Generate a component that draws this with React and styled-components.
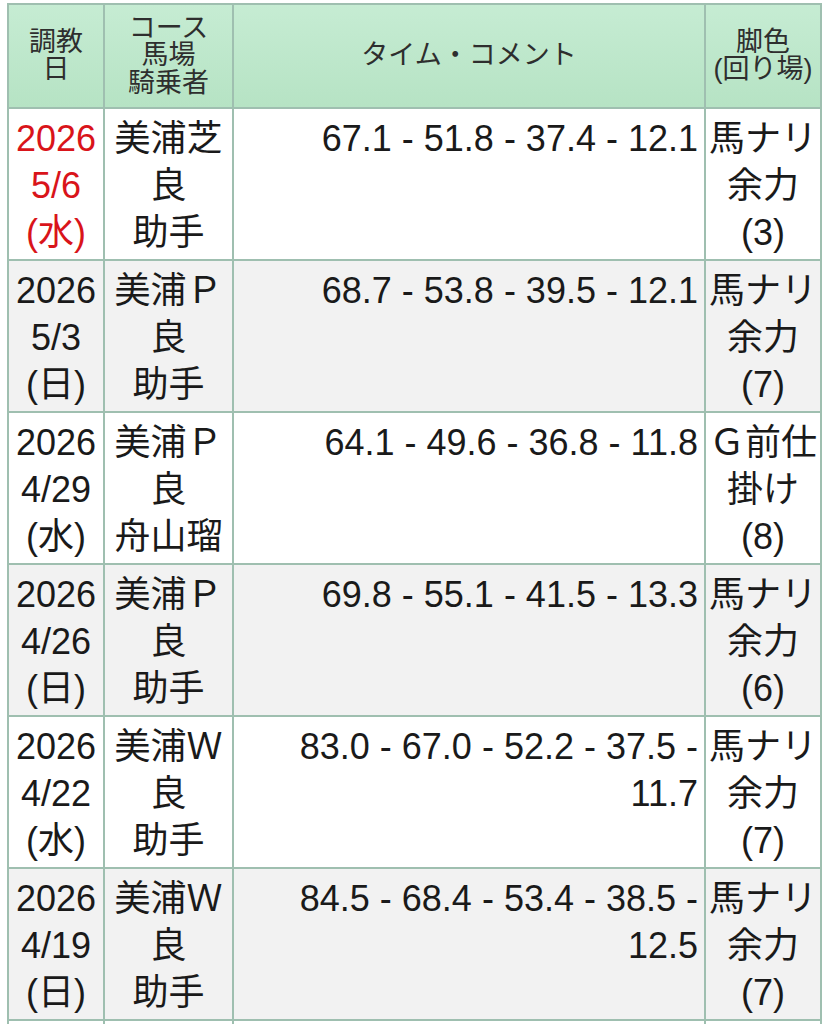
import styled, { createGlobalStyle } from "styled-components";

const GlobalStyle = createGlobalStyle`
  html, body {
    margin: 0;
    padding: 0;
    background: #fff;
  }
  body {
    padding: 3px 9px 0 7px;
    font-family: "Liberation Sans", "Noto Sans CJK JP", sans-serif;
    color: #1a1a1a;
  }
`;

const Table = styled.table`
  width: 815px;
  border-collapse: collapse;
  table-layout: fixed;
`;

const Head = styled.th`
  background: linear-gradient(#c6ecd3, #b6e3c4);
  border: 2px solid #9fbfb0;
  font-weight: normal;
  font-size: 27px;
  line-height: 27.5px;
  color: #2e2e2e;
  text-align: center;
  vertical-align: middle;
  padding: 0;
  height: 102px;
  width: ${(p) => p.$w}px;
`;

const Row = styled.tr`
  background: ${(p) => (p.$shade ? "#f2f2f2" : "#fff")};
`;

const Cell = styled.td`
  border: 2px solid #9fbfb0;
  font-size: 36px;
  line-height: 47px;
  padding: ${(p) => (p.$align === "right" ? "6px 6px 2px 3px" : "6px 2px 2px")};
  height: 142px;
  vertical-align: top;
  text-align: ${(p) => p.$align || "center"};
  color: ${(p) => (p.$red ? "#d9141a" : "#1a1a1a")};
`;

const Line = styled.div`
  white-space: nowrap;
`;

const Lines = ({ items }) =>
  items.map((t, i) => (
    <Line key={i}>{t}</Line>
  ));

const rows = [
  { date: ["2026", "5/6", "(水)"], red: true, course: ["美浦芝", "良", "助手"], time: "67.1 - 51.8 - 37.4 - 12.1", leg: ["馬ナリ", "余力", "(3)"] },
  { date: ["2026", "5/3", "(日)"], course: ["美浦Ｐ", "良", "助手"], time: "68.7 - 53.8 - 39.5 - 12.1", leg: ["馬ナリ", "余力", "(7)"] },
  { date: ["2026", "4/29", "(水)"], course: ["美浦Ｐ", "良", "舟山瑠"], time: "64.1 - 49.6 - 36.8 - 11.8", leg: ["Ｇ前仕", "掛け", "(8)"] },
  { date: ["2026", "4/26", "(日)"], course: ["美浦Ｐ", "良", "助手"], time: "69.8 - 55.1 - 41.5 - 13.3", leg: ["馬ナリ", "余力", "(6)"] },
  { date: ["2026", "4/22", "(水)"], course: ["美浦Ｗ", "良", "助手"], time: "83.0 - 67.0 - 52.2 - 37.5 - 11.7", leg: ["馬ナリ", "余力", "(7)"] },
  { date: ["2026", "4/19", "(日)"], course: ["美浦Ｗ", "良", "助手"], time: "84.5 - 68.4 - 53.4 - 38.5 - 12.5", leg: ["馬ナリ", "余力", "(7)"] },
  { date: ["2026", "4/15", "(水)"], course: ["美浦Ｐ", "良", "助手"], time: "66.2 - 51.0 - 37.6 - 12.4", leg: ["馬ナリ", "余力", "(7)"] },
];

export default function App() {
  return (
    <>
      <GlobalStyle />
      <Table>
        <thead>
          <tr>
            <Head $w={94}>調教<br />日</Head>
            <Head $w={127}>コース<br />馬場<br />騎乗者</Head>
            <Head $w={470}>タイム・コメント</Head>
            <Head $w={114}>脚色<br />(回り場)</Head>
          </tr>
        </thead>
        <tbody>
          {rows.map((r, i) => (
            <Row key={i} $shade={i % 2 === 1}>
              <Cell $red={r.red}><Lines items={r.date} /></Cell>
              <Cell><Lines items={r.course} /></Cell>
              <Cell $align="right">{r.time}</Cell>
              <Cell><Lines items={r.leg} /></Cell>
            </Row>
          ))}
        </tbody>
      </Table>
    </>
  );
}
